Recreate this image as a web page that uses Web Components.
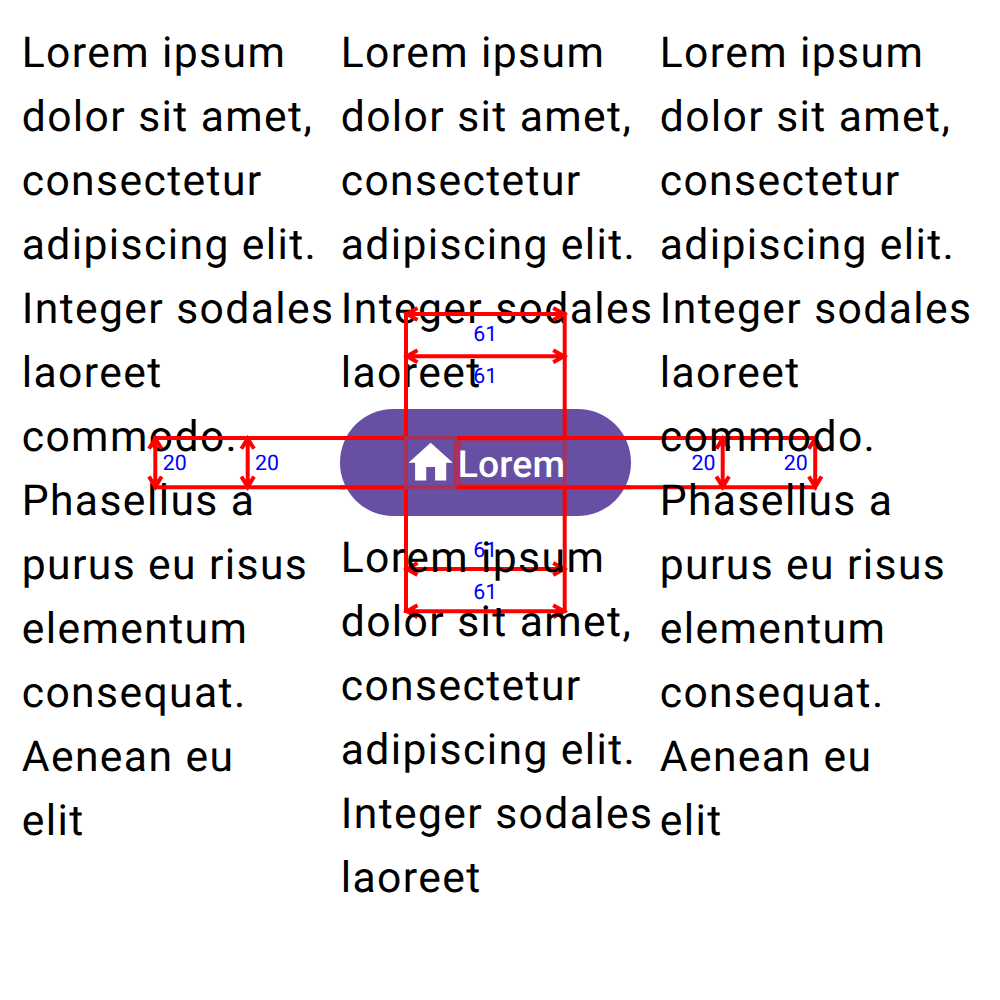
<!DOCTYPE html>
<html lang="en"><head><meta charset="utf-8"><title>Anchored lines</title>
<style>html,body{margin:0;background:#fff;text-rendering:geometricPrecision}</style></head><body>
<lorem-screen></lorem-screen>
<script>
const define=(name,html)=>{customElements.define(name,class extends HTMLElement{constructor(){super();this.attachShadow({mode:'open'}).innerHTML=html(this);}});};

define('text-block',()=>`<style>:host{display:block;position:relative;font:400 42.667px/64px Roboto,sans-serif;letter-spacing:1.390px;color:#000;white-space:pre-line}</style><slot></slot>`);

define('home-icon',()=>`<style>:host{display:block;width:53.330px;height:53.330px;flex:none}svg{display:block}</style><svg width="53.33" height="53.33" viewBox="0 0 24 24"><path fill="#fff" d="M10 20v-6h4v6h5v-8h3L12 3 2 12h3v8z"/></svg>`);

define('pill-button',()=>`<style>:host{display:flex;position:relative;z-index:2;box-sizing:border-box;width:290.67px;height:106.67px;align-items:center;padding-left:64.2px;font:500 37.333px/53.33px Roboto,sans-serif;letter-spacing:.1px;color:#fff}
:host::before{content:"";position:absolute;inset:0;border-radius:53.33px;background:#6750a4;z-index:-2}
home-icon,span{position:relative}span{margin-left:.3px;top:3px}.frame{position:absolute;left:0;top:0;z-index:-1}</style>
<svg class="frame" width="291" height="107" viewBox="0 0 291 107" fill="none"><path stroke="#f00" stroke-width="4" d="M0 29H64M0 78.300H64M117 29H291M117 78.300H291M66 0V27M66 80.300V107M224.700 0V27M224.700 80.300V107"/>
<path fill="#a6325f" fill-rule="evenodd" d="M64 27H117V80.300H64ZM68 31V76.300H113V31Z"/><path fill="#a6325f" d="M117 31H226.700V76.300H117ZM121 32.300V75H222.700V32.300Z" fill-rule="evenodd"/></svg>
<home-icon></home-icon><span><slot></slot></span>`);

define('measure-lines',()=>{
 const h=(y)=>`<path d="M407 ${y}H564M417.500 ${y-6}L407 ${y}L417.500 ${y+6}M553.200 ${y-6}L564 ${y}L553.200 ${y+6}"/>`;
 const v=(x)=>`<path d="M${x} 438V487.300M${x-6.300} 448.700L${x} 438.500L${x+6.300} 448.700M${x-6.300} 476.500L${x} 487L${x+6.300} 476.500"/>`;
 return `<style>:host{display:block;position:absolute;inset:0;pointer-events:none}svg{display:block}text{font:400 21.333px Roboto,sans-serif;fill:#00f}</style>
<svg width="1000" height="1000" viewBox="0 0 1000 1000"><g fill="none" stroke="#f00" stroke-width="4">
<path d="M406 312V410M406 515V613M564.700 312V410M564.700 515V613M153.300 438H345M625 438H817M153.300 487.300H345M625 487.300H817"/>
${h(314)}${h(356.2)}${h(569)}${h(611.2)}${v(155.3)}${v(247.7)}${v(722.7)}${v(815.2)}</g>
<text x="473.200" y="341.400">61</text><text x="473.200" y="383.300">61</text><text x="473.200" y="556.500">61</text><text x="473.200" y="598.500">61</text>
<text x="162.700" y="470.100">20</text><text x="255" y="470.100">20</text><text x="691.500" y="470.100">20</text><text x="783.700" y="470.100">20</text></svg>`;});

define('lorem-screen',()=>`<style>:host{display:flex;position:relative;box-sizing:border-box;width:1000px;height:1000px;overflow:hidden;padding:20.600px 0 0 21.700px}
.c{width:319px;flex:none}pill-button{margin:4.600px 0 9.700px -.7px}measure-lines{z-index:1}.over{z-index:3}</style>
<div class="c"><text-block>Lorem ipsum
dolor sit amet,
consectetur
adipiscing elit.
Integer sodales
laoreet
commodo.
Phasellus a
purus eu risus
elementum
consequat.
Aenean eu
elit</text-block></div>
<div class="c"><text-block>Lorem ipsum
dolor sit amet,
consectetur
adipiscing elit.
Integer sodales
laoreet</text-block><pill-button>Lorem</pill-button><text-block class="over">Lorem ipsum
dolor sit amet,
consectetur
adipiscing elit.
Integer sodales
laoreet</text-block></div>
<div class="c"><text-block class="over">Lorem ipsum
dolor sit amet,
consectetur
adipiscing elit.
Integer sodales
laoreet
commodo.
Phasellus a
purus eu risus
elementum
consequat.
Aenean eu
elit</text-block></div>
<measure-lines></measure-lines>`);
</script></body></html>
